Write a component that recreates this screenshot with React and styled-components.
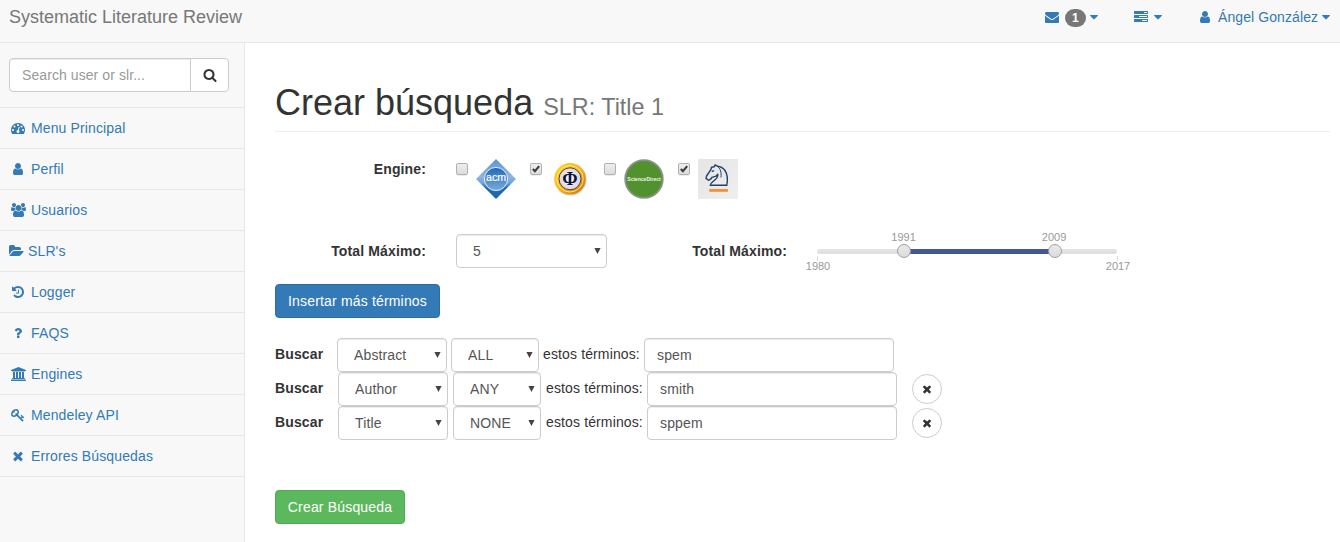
import React from "react";
import styled, { createGlobalStyle } from "styled-components";

const GlobalStyle = createGlobalStyle`
  *, *::before, *::after { box-sizing: border-box; }
  html, body { margin: 0; padding: 0; }
  body {
    background: #f8f8f8;
    color: #333;
    font-family: "Liberation Sans", Arial, sans-serif;
    font-size: 14px;
    line-height: 20px;
    letter-spacing: 0.13px;
    overflow: hidden;
  }
  input, select, button { font: inherit; letter-spacing: inherit; margin: 0; }
`;

/* ---------- icons ---------- */

const Svg = styled.svg`
  display: block;
  flex: none;
  width: ${(p) => p.$w || 14}px;
  height: 14px;
  fill: currentColor;
`;

const ICONS = {
  dashboard: "M384 1152q0-53-37.5-90.5t-90.5-37.5-90.5 37.5-37.5 90.5 37.5 90.5 90.5 37.5 90.5-37.5 37.5-90.5zm192-448q0-53-37.5-90.5t-90.5-37.5-90.5 37.5-37.5 90.5 37.5 90.5 90.5 37.5 90.5-37.5 37.5-90.5zm428 481l101-382q6-26-7.5-48.5t-38.5-29.5-48 6.5-30 39.5l-101 382q-60 5-107 43.5t-63 98.5q-20 77 20 146t117 89 146-20 89-117q16-60-6-117t-72-91zm660-33q0-53-37.5-90.5t-90.5-37.5-90.5 37.5-37.5 90.5 37.5 90.5 90.5 37.5 90.5-37.5 37.5-90.5zm-640-640q0-53-37.5-90.5t-90.5-37.5-90.5 37.5-37.5 90.5 37.5 90.5 90.5 37.5 90.5-37.5 37.5-90.5zm448 192q0-53-37.5-90.5t-90.5-37.5-90.5 37.5-37.5 90.5 37.5 90.5 90.5 37.5 90.5-37.5 37.5-90.5zm320 448q0 261-141 483-19 29-54 29h-1402q-35 0-54-29-141-221-141-483 0-182 71-348t191-286 286-191 348-71 348 71 286 191 191 286 71 348z",
  user: "M1536 1399q0 109-62.5 187t-150.5 78h-854q-88 0-150.5-78t-62.5-187q0-85 8.5-160.5t31.5-152 58.5-131 94-89 134.5-34.5q131 128 313 128t313-128q76 0 134.5 34.5t94 89 58.5 131 31.5 152 8.5 160.5zm-256-887q0 159-112.5 271.5t-271.5 112.5-271.5-112.5-112.5-271.5 112.5-271.5 271.5-112.5 271.5 112.5 112.5 271.5z",
  users: "M593 896q-162 5-265 128h-134q-82 0-138-40.5t-56-118.5q0-353 124-353 6 0 43.5 21t97.5 42.5 119 21.5q67 0 133-23-5 37-5 66 0 139 81 256zm1071 637q0 120-73 189.5t-194 69.5h-874q-121 0-194-69.5t-73-189.5q0-53 3.5-103.5t14-109 26.5-108.5 43-97.5 62-81 85.5-53.5 111.5-20q10 0 43 21.5t73 48 107 48 135 21.5 135-21.5 107-48 73-48 43-21.5q61 0 111.5 20t85.5 53.5 62 81 43 97.5 26.5 108.5 14 109 3.5 103.5zm-1024-1277q0 106-75 181t-181 75-181-75-75-181 75-181 181-75 181 75 75 181zm704 384q0 159-112.5 271.5t-271.5 112.5-271.5-112.5-112.5-271.5 112.5-271.5 271.5-112.5 271.5 112.5 112.5 271.5zm576 225q0 78-56 118.5t-138 40.5h-134q-103-123-265-128 81-117 81-256 0-29-5-66 66 23 133 23 59 0 119-21.5t97.5-42.5 43.5-21q124 0 124 353zm-128-609q0 106-75 181t-181 75-181-75-75-181 75-181 181-75 181 75 75 181z",
  folder: "M1879 952q0 31-31 66l-336 396q-43 51-120.5 86.5t-143.5 35.5h-1088q-34 0-60.5-13t-26.5-43q0-31 31-66l336-396q43-51 120.5-86.5t143.5-35.5h1088q34 0 60.5 13t26.5 43zm-343-344v160h-832q-94 0-197 47.5t-164 119.5l-337 396-5 6q0-4-.5-12.5t-.5-12.5v-960q0-92 66-158t158-66h320q92 0 158 66t66 158v32h544q92 0 158 66t66 158z",
  history: "M1664 896q0 156-61 298t-164 245-245 164-298 61q-172 0-327-72.5t-264-204.5q-7-10-6.5-22.5t8.5-20.5l137-138q10-9 25-9 16 2 23 12 73 95 179 147t225 52q104 0 198.5-40.5t163.5-109.5 109.5-163.5 40.5-198.5-40.5-198.5-109.5-163.5-163.5-109.5-198.5-40.5q-98 0-188 35.5t-160 101.5l137 138q31 30 14 69-17 40-59 40h-448q-26 0-45-19t-19-45v-448q0-42 40-59 39-17 69 14l130 129q107-101 244.5-156.5t284.5-55.5q156 0 298 61t245 164 164 245 61 298zm-640-288v448q0 14-9 23t-23 9h-320q-14 0-23-9t-9-23v-64q0-14 9-23t23-9h224v-352q0-14 9-23t23-9h64q14 0 23 9t9 23z",
  help: "M1088 1256v240q0 16-12 28t-28 12h-240q-16 0-28-12t-12-28v-240q0-16 12-28t28-12h240q16 0 28 12t12 28zm316-600q0 54-15.5 101t-35 76.5-55 59.5-57.5 43.5-61 35.5q-41 23-68.5 65t-27.5 67q0 17-12 32.5t-28 15.5h-240q-15 0-25.5-18.5t-10.5-37.5v-45q0-83 65-156.5t143-108.5q59-27 84-56t25-76q0-42-46.5-74t-107.5-32q-65 0-108 29-35 25-107 115-13 16-31 16-12 0-25-8l-164-125q-13-10-15.5-25t5.5-28q160-266 464-266 80 0 161 31t146 83 106 127.5 41 158.5z",
  university: "M960 0l960 384v128h-128q0 26-20.5 45t-48.5 19h-1526q-28 0-48.5-19t-20.5-45h-128v-128zm-704 640h256v768h128v-768h256v768h128v-768h256v768h128v-768h256v768h59q28 0 48.5 19t20.5 45v64h-1664v-64q0-26 20.5-45t48.5-19h59v-768zm1595 960q28 0 48.5 19t20.5 45v128h-1920v-128q0-26 20.5-45t48.5-19h1782z",
  key: "M832 512q0-80-56-136t-136-56-136 56-56 136q0 42 19 83-41-19-83-19-80 0-136 56t-56 136 56 136 136 56 136-56 56-136q0-42-19-83 41 19 83 19 80 0 136-56t56-136zm851 704q0 17-49 66t-66 49q-9 0-28.5-16t-36.5-33-38.5-40-24.5-26l-96 96 220 220q28 28 28 68 0 42-39 81t-81 39q-40 0-68-28l-671-671q-176 131-365 131-163 0-265.5-102.5t-102.5-265.5q0-160 95-313t248-248 313-95q163 0 265.5 102.5t102.5 265.5q0 189-131 365l355 355 96-96q-3-3-26-24.5t-40-38.5-33-36.5-16-28.5q0-17 49-66t66-49q13 0 23 10 6 6 46 44.5t82 79.5 86.5 86 73 78 28.5 41z",
  times: "M1490 1322q0 40-28 68l-136 136q-28 28-68 28t-68-28l-294-294-294 294q-28 28-68 28t-68-28l-136-136q-28-28-28-68t28-68l294-294-294-294q-28-28-28-68t28-68l136-136q28-28 68-28t68 28l294 294 294-294q28-28 68-28t68 28l136 136q28 28 28 68t-28 68l-294 294 294 294q28 28 28 68z",
  envelope: "M1792 710v794q0 66-47 113t-113 47h-1472q-66 0-113-47t-47-113v-794q44 49 101 87 362 246 497 345 57 42 92.5 65.5t94.5 48 110 24.5h2q51 0 110-24.5t94.5-48 92.5-65.5q170-123 498-345 57-39 100-87zm0-294q0 79-49 151t-122 123q-376 261-468 325-10 7-42.5 31t-54 38.5-52 32.5-57.5 27-50 9h-2q-23 0-50-9t-57.5-27-52-32.5-54-38.5-42.5-31q-91-64-262-182.5t-205-142.5q-62-42-117-115.5t-55-136.5q0-78 41.5-130t118.5-52h1472q65 0 112.5 47t47.5 113z",
  tasks: "M1024 1408h640v-128h-640v128zm-384-512h1024v-128h-1024v128zm640-512h384v-128h-384v128zm512 832v256q0 26-19 45t-45 19h-1664q-26 0-45-19t-19-45v-256q0-26 19-45t45-19h1664q26 0 45 19t19 45zm0-512v256q0 26-19 45t-45 19h-1664q-26 0-45-19t-19-45v-256q0-26 19-45t45-19h1664q26 0 45 19t19 45zm0-512v256q0 26-19 45t-45 19h-1664q-26 0-45-19t-19-45v-256q0-26 19-45t45-19h1664q26 0 45 19t19 45z",
  caret: "M1408 704q0 26-19 45l-448 448q-19 19-45 19t-45-19l-448-448q-19-19-19-45t19-45 45-19h896q26 0 45 19t19 45z",
  search: "M1216 832q0-185-131.5-316.5t-316.5-131.5-316.5 131.5-131.5 316.5 131.5 316.5 316.5 131.5 316.5-131.5 131.5-316.5zm512 832q0 52-38 90t-90 38q-54 0-90-38l-343-342q-179 124-399 124-143 0-273.5-55.5t-225-150-150-225-55.5-273.5 55.5-273.5 150-225 225-150 273.5-55.5 273.5 55.5 225 150 150 225 55.5 273.5q0 220-124 399l343 343q37 37 37 90z",
};

const WIDE = new Set(["users", "folder", "university"]);

function Icon({ name }) {
  const wide = WIDE.has(name);
  return (
    <Svg $w={wide ? 15 : 14} viewBox={`0 0 ${wide ? 1920 : 1792} 1792`} aria-hidden="true">
      <path d={ICONS[name]} />
    </Svg>
  );
}

/* ---------- top bar ---------- */

const Page = styled.div`
  display: flex;
  flex-direction: column;
  height: 542px;
`;

const TopBar = styled.header`
  display: flex;
  justify-content: space-between;
  height: 43px;
  padding: 7px 7px 0 9px;
  border-bottom: 1px solid #e7e7e7;
`;

const Brand = styled.span`
  color: #777;
  font-size: 18px;
  letter-spacing: 0;
`;

const TopMenu = styled.nav`
  display: flex;
  height: 20px;
  color: #337ab7;
`;

const TopItem = styled.a`
  display: flex;
  align-items: center;
  gap: ${(p) => p.$inner || 0}px;
  margin-left: ${(p) => p.$gap || 0}px;
`;

const Badge = styled.span`
  width: 21px;
  height: 18px;
  margin: 2px 1px 0 6px;
  border-radius: 10px;
  background: #777;
  color: #fff;
  font-size: 12px;
  font-weight: bold;
  line-height: 18px;
  text-align: center;
`;

const UserName = styled.span`
  margin-left: 6px;
  width: 101px;
  letter-spacing: 0.09px;
  white-space: nowrap;
`;

/* ---------- side bar ---------- */

const Body = styled.div`
  display: flex;
  flex: 1;
  min-height: 0;
`;

const SideBar = styled.aside`
  width: 245px;
  border-right: 1px solid #e7e7e7;
`;

const SearchBox = styled.div`
  display: flex;
  height: 65px;
  padding: 15px 15px 15px 9px;
  border-bottom: 1px solid #e7e7e7;
`;

const controlBorder = "1px solid #ccc";
const innerShadow = "inset 0 1px 1px rgba(0, 0, 0, 0.075)";

const SearchInput = styled.input`
  width: 182px;
  height: 34px;
  padding: 6px 12px;
  border: ${controlBorder};
  border-radius: 4px 0 0 4px;
  background: #fff;
  box-shadow: ${innerShadow};
  letter-spacing: 0.08px;
  outline: none;
  &::placeholder { color: #999; }
`;

const SearchButton = styled.button`
  display: flex;
  align-items: center;
  justify-content: center;
  width: 39px;
  height: 34px;
  margin-left: -1px;
  padding: 0;
  border: ${controlBorder};
  border-radius: 0 4px 4px 0;
  background: #fff;
  color: #333;
`;

const SideItem = styled.a`
  display: flex;
  align-items: center;
  height: 41px;
  padding: 0 9px;
  border-bottom: 1px solid #e7e7e7;
  color: #337ab7;
`;

const IconCell = styled.span`
  display: flex;
  justify-content: center;
  width: ${(p) => (p.$tight ? 15 : 18)}px;
  margin-right: 4px;
`;

/* ---------- content ---------- */

const Main = styled.main`
  flex: 1;
  padding: 38px 10px 0 30px;
  background: #fff;
`;

const Heading = styled.h1`
  display: flex;
  align-items: baseline;
  gap: 10px;
  height: 51px;
  margin: 0;
  padding-top: 2px;
  border-bottom: 1px solid #eee;
  font-size: 36px;
  font-weight: normal;
  letter-spacing: 0;
  line-height: 40px;
`;

const SubHeading = styled.small`
  color: #777;
  font-size: 23.4px;
`;

const EngineRow = styled.div`
  display: flex;
  align-items: flex-start;
  height: 102px;
  padding-top: 27px;
`;

const FieldLabel = styled.label`
  width: ${(p) => p.$w}px;
  margin-right: ${(p) => p.$gap}px;
  font-weight: bold;
  text-align: right;
  white-space: nowrap;
`;

const Engine = styled.label`
  display: flex;
  align-items: flex-start;
  gap: 8px;
  width: 74px;
`;

const CheckBox = styled.span`
  width: 12px;
  height: 12px;
  margin-top: 4px;
  border: 1px solid #b1b1b1;
  border-radius: 2px;
  background: linear-gradient(#eee, #dcdcdc);
  box-shadow: 0 1px 1px rgba(0, 0, 0, 0.08);
  svg { display: block; width: 10px; height: 10px; }
`;

const Logo = styled.svg`
  display: block;
  width: 40px;
  height: 40px;
  font-family: "Liberation Sans", Arial, sans-serif;
  letter-spacing: 0;
`;

const FilterRow = styled.div`
  display: flex;
  align-items: center;
  height: 34px;
  margin-bottom: 16px;
`;

const SelectWrap = styled.span`
  position: relative;
  flex: none;
  width: ${(p) => p.$w}px;
  height: 34px;
  margin-right: ${(p) => p.$gap}px;
`;

const Select = styled.select`
  width: 100%;
  height: 34px;
  padding: 0 16px;
  appearance: none;
  border: ${controlBorder};
  border-radius: 4px;
  background: #fff;
  box-shadow: ${innerShadow};
  color: #555;
  outline: none;
`;

const SelectArrow = styled.svg`
  position: absolute;
  top: 14px;
  right: 6px;
  width: 7px;
  height: 6px;
  fill: #444;
  pointer-events: none;
`;

const Slider = styled.div`
  position: relative;
  width: 300px;
  height: 34px;
  color: #999;
  font-size: 11px;
  letter-spacing: 0;
  line-height: 12px;
`;

const Track = styled.div`
  margin-top: 15px;
  height: 5px;
  border-radius: 3px;
  background: linear-gradient(#e5e5e5, #dedede);
`;

const Range = styled.div`
  position: absolute;
  top: 15px;
  height: 5px;
  background: linear-gradient(#48589a, #3f5796);
`;

const Handle = styled.span`
  position: absolute;
  top: 10px;
  width: 14px;
  height: 14px;
  margin-left: -7px;
  border: 1px solid #a0a0a0;
  border-radius: 50%;
  background: linear-gradient(#e9e9e9, #dcdcdc);
`;

const Mark = styled.span`
  position: absolute;
  top: ${(p) => (p.$below ? 26 : -3)}px;
  transform: translateX(-50%);
`;

const Tick = styled.span`
  position: absolute;
  top: 22px;
  width: 1px;
  height: 5px;
  background: #ddd;
`;

const Button = styled.button`
  display: block;
  width: ${(p) => p.$w}px;
  height: 34px;
  padding: 0;
  border: 1px solid ${(p) => (p.$green ? "#4cae4c" : "#2e6da4")};
  border-radius: 4px;
  background: ${(p) => (p.$green ? "#5cb85c" : "#337ab7")};
  color: #fff;
  letter-spacing: 0.17px;
  white-space: nowrap;
`;

const Terms = styled.div`
  margin: 20px 0 50px;
`;

const TermRow = styled.div`
  display: flex;
  align-items: center;
  height: 34px;
`;

const TermLabel = styled.strong`
  width: ${(p) => p.$w}px;
  padding-bottom: 2px;
`;

const TermText = styled.span`
  width: 101px;
  padding-bottom: 2px;
  white-space: nowrap;
`;

const TermInput = styled.input`
  width: 250px;
  height: 34px;
  padding: 6px 12px;
  border: ${controlBorder};
  border-radius: 4px;
  box-shadow: ${innerShadow};
  color: #555;
  outline: none;
`;

const RemoveButton = styled.button`
  display: flex;
  align-items: center;
  justify-content: center;
  width: 30px;
  height: 30px;
  margin-left: 15px;
  padding: 0;
  border: ${controlBorder};
  border-radius: 50%;
  background: #fff;
  color: #333;
  svg { width: 12px; height: 12px; }
`;

/* ---------- engine logos ---------- */

function AcmLogo() {
  return (
    <Logo viewBox="0 0 40 40">
      <defs>
        <linearGradient id="acmTop" x1="0" y1="0" x2="0" y2="1">
          <stop offset="0" stopColor="#5c97d4" />
          <stop offset="0.45" stopColor="#8db5e2" />
          <stop offset="0.6" stopColor="#6fa3da" />
          <stop offset="0.72" stopColor="#2168b1" />
          <stop offset="1" stopColor="#1767b3" />
        </linearGradient>
        <linearGradient id="acmDisc" x1="0" y1="0" x2="0" y2="1">
          <stop offset="0" stopColor="#1f6bb4" />
          <stop offset="1" stopColor="#79aadf" />
        </linearGradient>
      </defs>
      <path d="M20 0L40 20L20 40L0 20Z" fill="url(#acmTop)" />
      <circle cx="20" cy="20" r="11.6" fill="url(#acmDisc)" stroke="#e4effa" strokeWidth="1" />
      <text x="20" y="22.4" fontSize="10" fill="#fff" stroke="#fff" strokeWidth="0.2" textAnchor="middle" textLength="20" lengthAdjust="spacingAndGlyphs">acm</text>
    </Logo>
  );
}

function PhiLogo() {
  return (
    <Logo viewBox="0 0 40 40">
      <defs>
        <linearGradient id="gold" x1="0" y1="0" x2="1" y2="1">
          <stop offset="0" stopColor="#ffd92e" />
          <stop offset="0.5" stopColor="#f9b51b" />
          <stop offset="1" stopColor="#c96a0b" />
        </linearGradient>
        <radialGradient id="pearl">
          <stop offset="0" stopColor="#fff" />
          <stop offset="1" stopColor="#d6d6e0" />
        </radialGradient>
      </defs>
      <rect width="40" height="40" fill="#fdfefe" />
      <circle cx="20.6" cy="20.6" r="16" fill="#d9d3cc" />
      <circle cx="20" cy="19.8" r="15.8" fill="url(#gold)" />
      <circle cx="20" cy="19.8" r="13.2" fill="none" stroke="#ffe88a" strokeWidth="0.9" />
      <circle cx="20" cy="19.8" r="11" fill="url(#pearl)" stroke="#6b4420" strokeWidth="1" />
      <text transform="translate(20 25.9) scale(1 1)" fontSize="18.5" fontWeight="bold" fontFamily="Liberation Serif, serif" fill="#12123f" textAnchor="middle">Φ</text>
    </Logo>
  );
}

function ScienceDirectLogo() {
  return (
    <Logo viewBox="0 0 40 40">
      <circle cx="20" cy="20" r="18.8" fill="#51922f" stroke="#8b918b" strokeWidth="1.8" />
      <text x="20" y="22.2" fontSize="6.2" fontWeight="bold" fill="#eef6ea" textAnchor="middle" textLength="33.5" lengthAdjust="spacingAndGlyphs">ScienceDirect</text>
    </Logo>
  );
}

function SpringerLogo() {
  return (
    <Logo viewBox="0 0 40 40">
      <defs>
        <linearGradient id="paper" x1="0" y1="0" x2="1" y2="1">
          <stop offset="0" stopColor="#e5e5e5" />
          <stop offset="1" stopColor="#f0eeee" />
        </linearGradient>
      </defs>
      <rect width="40" height="40" fill="url(#paper)" />
      <g fill="none" stroke="#20416d" strokeWidth="1.4" strokeLinejoin="round" strokeLinecap="round">
        <path d="M12.2 26.3H28.8C29.6 22 29.6 15.5 27 11.5C25 8.8 22.5 7.4 19.5 7.2L17 5.9L16.3 7.8L13.5 8.2L13 10.3L11.8 12.1L8.6 17L8 19.4L10.5 21.3L12.5 20.2L14 18.3L18 17.2L19.8 15.3C20.2 19 17.5 20.5 15 22.5C13.5 23.7 12.2 25 12.2 26.3Z" />
        <path d="M19.5 7.2C22.7 9.8 23.5 13.5 23 18" strokeWidth="1" />
        <path d="M14.2 12.2L15.6 11.9" />
      </g>
      <rect x="11.3" y="30" width="18.6" height="2.8" fill="#f2913a" />
    </Logo>
  );
}

/* ---------- composition ---------- */

const menu = [
  ["dashboard", "Menu Principal"],
  ["user", "Perfil"],
  ["users", "Usuarios"],
  ["folder", "SLR's"],
  ["history", "Logger"],
  ["help", "FAQS"],
  ["university", "Engines"],
  ["key", "Mendeley API"],
  ["times", "Errores Búsquedas"],
];

const engines = [
  { Art: AcmLogo, checked: false },
  { Art: PhiLogo, checked: true },
  { Art: ScienceDirectLogo, checked: false },
  { Art: SpringerLogo, checked: true },
];

const terms = [
  { field: "Abstract", mode: "ALL", value: "spem" },
  { field: "Author", mode: "ANY", value: "smith", removable: true },
  { field: "Title", mode: "NONE", value: "sppem", removable: true },
];

function Picker({ value, width, gap }) {
  return (
    <SelectWrap $w={width} $gap={gap}>
      <Select defaultValue={value}>
        <option>{value}</option>
      </Select>
      <SelectArrow viewBox="0 0 7 6"><path d="M0.4 0H6.6L3.5 6Z" /></SelectArrow>
    </SelectWrap>
  );
}

function YearSlider({ min, max, from, to }) {
  const at = (year) => ((year - min) / (max - min)) * 286 + 0.6;
  const left = at(from) + 1.4;
  const right = at(to) + 12.8;
  return (
    <Slider>
      <Track />
      <Range style={{ left, width: right - left }} />
      <Tick style={{ left: 0 }} />
      <Tick style={{ left: 300 }} />
      <Handle style={{ left: left + 0.2 }} />
      <Handle style={{ left: right }} />
      <Mark style={{ left: left - 0.5 }}>{from}</Mark>
      <Mark style={{ left: right - 0.5 }}>{to}</Mark>
      <Mark $below style={{ left: 1 }}>{min}</Mark>
      <Mark $below style={{ left: 301 }}>{max}</Mark>
    </Slider>
  );
}

export default function App() {
  return (
    <Page>
      <GlobalStyle />
      <TopBar>
        <Brand>Systematic Literature Review</Brand>
        <TopMenu>
          <TopItem>
            <Icon name="envelope" />
            <Badge>1</Badge>
            <Icon name="caret" />
          </TopItem>
          <TopItem $gap={33} $inner={3}>
            <Icon name="tasks" />
            <Icon name="caret" />
          </TopItem>
          <TopItem $gap={33}>
            <Icon name="user" />
            <UserName>Ángel González</UserName>
            <Icon name="caret" />
          </TopItem>
        </TopMenu>
      </TopBar>
      <Body>
        <SideBar>
          <SearchBox>
            <SearchInput placeholder="Search user or slr..." />
            <SearchButton aria-label="Search"><Icon name="search" /></SearchButton>
          </SearchBox>
          {menu.map(([icon, label]) => (
            <SideItem key={label}>
              <IconCell $tight={icon === "folder"}><Icon name={icon} /></IconCell>
              {label}
            </SideItem>
          ))}
        </SideBar>
        <Main>
          <Heading>
            Crear búsqueda <SubHeading>SLR: Title 1</SubHeading>
          </Heading>
          <EngineRow>
            <FieldLabel $w={151} $gap={30}>Engine:</FieldLabel>
            {engines.map(({ Art, checked }, i) => (
              <Engine key={i}>
                <CheckBox>
                  {checked && (
                    <svg viewBox="0 0 11 11">
                      <path d="M2 5.6L4.3 8L9 2.4" fill="none" stroke="#3c3c3c" strokeWidth="2.3" />
                    </svg>
                  )}
                </CheckBox>
                <Art />
              </Engine>
            ))}
          </EngineRow>
          <FilterRow>
            <FieldLabel $w={151} $gap={30}>Total Máximo:</FieldLabel>
            <Picker value="5" width={151} gap={29} />
            <FieldLabel $w={151} $gap={30}>Total Máximo:</FieldLabel>
            <YearSlider min={1980} max={2017} from={1991} to={2009} />
          </FilterRow>
          <Button $w={165}>Insertar más términos</Button>
          <Terms>
            {terms.map((t) => (
              <TermRow key={t.field}>
                <TermLabel $w={t.removable ? 63 : 62}>Buscar</TermLabel>
                <Picker value={t.field} width={110} gap={t.removable ? 5 : 4} />
                <Picker value={t.mode} width={88} gap={t.removable ? 5 : 4} />
                <TermText>estos términos:</TermText>
                <TermInput defaultValue={t.value} />
                {t.removable && (
                  <RemoveButton aria-label="Remove"><Icon name="times" /></RemoveButton>
                )}
              </TermRow>
            ))}
          </Terms>
          <Button $green $w={130}>Crear Búsqueda</Button>
        </Main>
      </Body>
    </Page>
  );
}
